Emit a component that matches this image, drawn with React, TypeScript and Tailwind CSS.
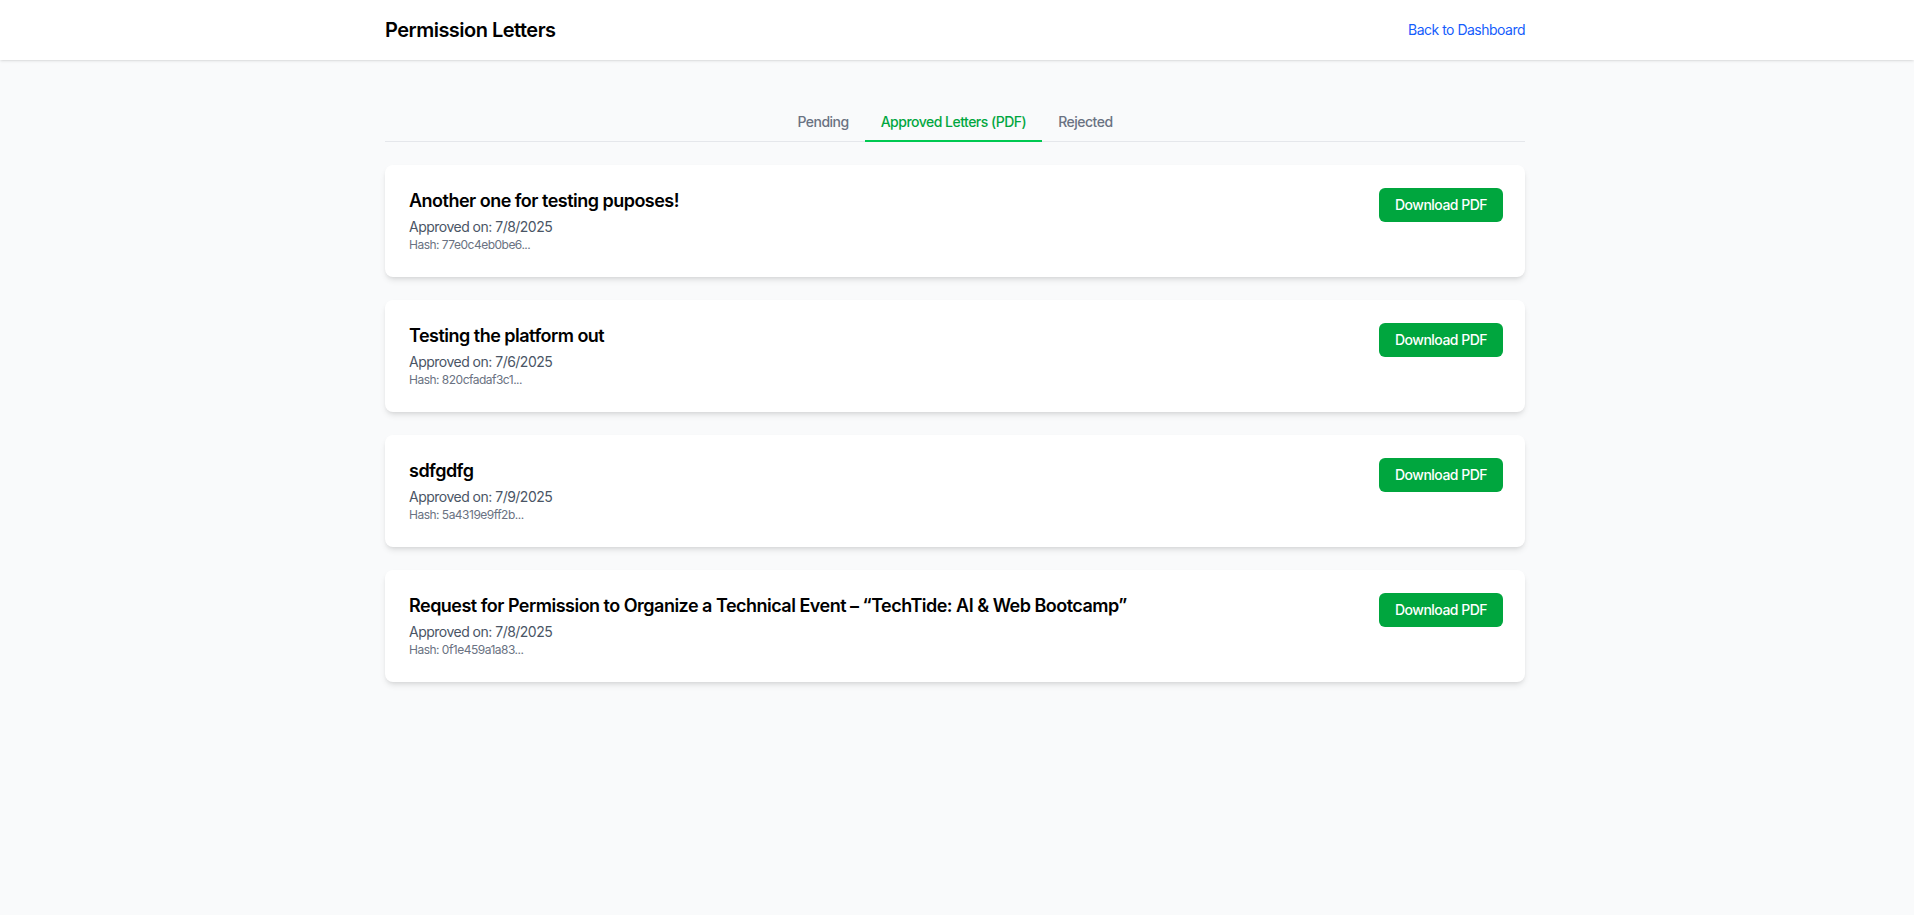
const letters = [
  {
    id: '1',
    title: 'Another one for testing puposes!',
    approvedOn: '7/8/2025',
    hash: '77e0c4eb0be6',
  },
  {
    id: '2',
    title: 'Testing the platform out',
    approvedOn: '7/6/2025',
    hash: '820cfadaf3c1',
  },
  {
    id: '3',
    title: 'sdfgdfg',
    approvedOn: '7/9/2025',
    hash: '5a4319e9ff2b',
  },
  {
    id: '4',
    title: 'Request for Permission to Organize a Technical Event – “TechTide: AI & Web Bootcamp”',
    approvedOn: '7/8/2025',
    hash: '0f1e459a1a83',
  },
]

const tabs = ['Pending', 'Approved Letters (PDF)', 'Rejected']

export default function App() {
  const active = 'Approved Letters (PDF)'

  return (
    <div className="min-h-screen bg-gray-50 font-['Inter',sans-serif] tracking-[-0.032em]">
      {/* Header */}
      <header className="bg-white shadow-sm">
        <div className="max-w-[1144px] mx-auto pr-1 py-4 flex items-center justify-between">
          <h1 className="text-xl font-semibold text-black">Permission Letters</h1>
          <a href="#" className="text-sm text-blue-600 hover:text-blue-800">
            Back to Dashboard
          </a>
        </div>
      </header>

      <main className="max-w-[1144px] mx-auto pr-1 pt-11 pb-12">
        {/* Tabs */}
        <div className="flex justify-center border-b border-gray-200 mb-[23px]">
          {tabs.map((tab) => (
            <button
              key={tab}
              className={
                tab === active
                  ? 'px-4 py-2 -mb-px text-sm font-medium text-green-600 border-b-2 border-green-500'
                  : 'px-4 py-2 -mb-px text-sm font-medium text-gray-500 border-b-2 border-transparent'
              }
            >
              {tab}
            </button>
          ))}
        </div>

        {/* Letters */}
        <div className="flex flex-col gap-[23px]">
          {letters.map((letter) => (
            <div
              key={letter.id}
              className="bg-white rounded-lg shadow-md pl-6 pr-[22px] py-6 flex items-start justify-between"
            >
              <div>
                <h3 className="text-lg leading-6 font-semibold text-black">{letter.title}</h3>
                <p className="mt-1 text-sm text-gray-600">Approved on: {letter.approvedOn}</p>
                <p className="text-xs text-gray-500">Hash: {letter.hash}...</p>
              </div>
              <button className="-mt-px bg-green-600 text-white text-sm font-medium px-4 py-[7px] rounded-md hover:bg-green-700">
                Download PDF
              </button>
            </div>
          ))}
        </div>
      </main>
    </div>
  )
}
